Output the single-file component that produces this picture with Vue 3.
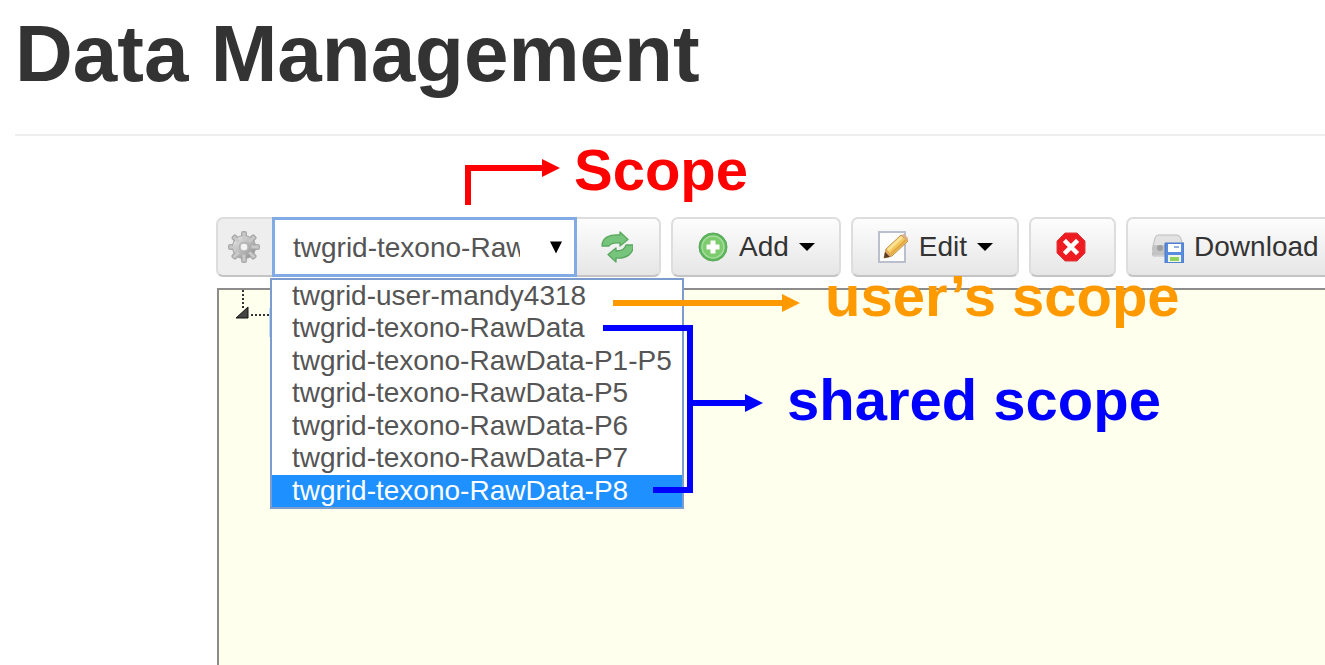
<script setup>
import { ref } from 'vue'

const scopes = [
  'twgrid-user-mandy4318',
  'twgrid-texono-RawData',
  'twgrid-texono-RawData-P1-P5',
  'twgrid-texono-RawData-P5',
  'twgrid-texono-RawData-P6',
  'twgrid-texono-RawData-P7',
  'twgrid-texono-RawData-P8',
]
const scope = ref(scopes[6])
const teeth = [0, 45, 90, 135, 180, 225, 270, 315]
</script>

<template>
  <main class="page">
    <h1 class="title">Data Management</h1>

    <section class="manager">
      <div class="toolbar">
        <div class="group">
          <label class="addon" for="scope" aria-label="Scope">
            <svg class="icon" viewBox="0 0 32 32">
              <defs>
                <linearGradient id="gearFill" x1="0" y1="0" x2="1" y2="1">
                  <stop offset="0" stop-color="#dedede" />
                  <stop offset="1" stop-color="#999" />
                </linearGradient>
              </defs>
              <g fill="#ababab">
                <rect v-for="t in teeth" :key="t" x="13" y="0" width="6" height="9" rx="2" :transform="`rotate(${t} 16 16)`" />
              </g>
              <circle cx="16" cy="16" r="8" fill="none" stroke="#a3a3a3" stroke-width="8" />
              <circle cx="16" cy="16" r="8" fill="none" stroke="url(#gearFill)" stroke-width="6" />
              <g fill="#c9c9c9">
                <rect v-for="t in teeth" :key="t" x="14.5" y="1.5" width="3" height="7" :transform="`rotate(${t} 16 16)`" />
              </g>
              <circle cx="16" cy="16" r="4" fill="#f4f4f4" stroke="#b9b9b9" stroke-width="1.5" />
            </svg>
          </label>
          <div class="picker">
            <select id="scope" v-model="scope" class="select">
              <option v-for="s in scopes" :key="s" :value="s">{{ s }}</option>
            </select>
            <svg class="arrow" viewBox="0 0 12 12"><path d="M0 0H12L6 12Z" fill="#000" /></svg>
            <ul class="menu" role="listbox" aria-label="Scopes">
              <li v-for="s in scopes" :key="s" role="option" :aria-selected="s === scope" :class="['option', { active: s === scope }]" @click="scope = s">{{ s }}</li>
            </ul>
          </div>
          <button class="btn refresh" type="button" aria-label="Refresh">
            <svg class="icon" viewBox="0 0 32 32" stroke="#5aa860" stroke-width="1.3" stroke-linejoin="round">
              <path d="M1 15C1 7 8 3 19 4V1L27 8.500L19 15V12C13 11.500 10 12 8 15Z" fill="#77c47c" />
              <path d="M32 14C33 22 26 28 15 27V31L7 23.500L15 17V20C21 20 24 18 25 14Z" fill="#77c47c" />
            </svg>
          </button>
        </div>

        <button class="btn" type="button">
          <svg class="icon" viewBox="0 0 32 32">
            <circle cx="16" cy="16" r="14" fill="#5cb85a" stroke="#5aa95b" stroke-width="1" />
            <circle cx="16" cy="16" r="11" fill="#7ccb6d" stroke="#a6dc9e" stroke-width="1.5" />
            <path d="M13.500 9.500h5v4h4v5h-4v4h-5v-4h-4v-5h4z" fill="#fff" />
          </svg>
          <span>Add</span>
          <svg class="caret" viewBox="0 0 16 8"><path d="M0 0H16L8 8Z" /></svg>
        </button>

        <button class="btn" type="button">
          <svg class="icon" viewBox="0 0 32 32">
            <path d="M2 1h26v30H2z" fill="#fdfdfe" stroke="#b9bfcc" stroke-width="2" />
            <path d="M7 27l2-9L24 4l7 6-16 15z" fill="#f4c65c" stroke="#c0924a" stroke-width="1" />
            <path d="M11 19L25 6" stroke="#fbe294" stroke-width="3" />
            <path d="M14 23L29 9" stroke="#e0a743" stroke-width="2" />
            <path d="M24 4l3-1 4 4v3z" fill="#dcb08a" />
            <path d="M7 27l2-9 6 7z" fill="#dda663" />
            <path d="M7 27l1-6 5 5z" fill="#5a3b24" />
          </svg>
          <span>Edit</span>
          <svg class="caret" viewBox="0 0 16 8"><path d="M0 0H16L8 8Z" /></svg>
        </button>

        <button class="btn delete" type="button" aria-label="Delete">
          <svg class="icon" viewBox="0 0 32 32">
            <path d="M10 2h12l8 8v12l-8 8H10l-8-8V10z" fill="#ee1c20" stroke="#df3a3d" stroke-width="1" />
            <path d="M11 11l10 10M21 11L11 21" stroke="#fff" stroke-width="4.500" stroke-linecap="square" />
          </svg>
        </button>

        <button class="btn" type="button">
          <svg class="icon" viewBox="0 0 32 32">
            <path d="M6 4h19q3 0 4 4l2 7v10H1q-2-5 0-10l2-8q1-3 3-3z" fill="#e2e2e2" stroke="#bdbdbd" stroke-width="1" />
            <path d="M1 14h29v10H1z" fill="#c3c3c3" />
            <circle cx="8" cy="17" r="3" fill="#9f9f9f" />
            <path d="M13 12h19v20H13z" fill="#5b8bdc" stroke="#4b78c8" stroke-width="1" />
            <path d="M16 13h13v8H16z" fill="#fff" />
            <path d="M22 15h5v2h-5z" fill="#8fb0e8" />
            <path d="M16 24h13v7H16z" fill="#eef7ea" />
            <path d="M18 26h9v4h-9z" fill="#8ed45c" />
          </svg>
          <span>Download</span>
        </button>
      </div>

      <div class="tree">
        <svg class="branch" viewBox="0 0 54 50">
          <path d="M24 0V18M32 25H54" fill="none" stroke="#333" stroke-width="2" stroke-dasharray="2 2" />
          <path d="M17 28L29 17V28Z" fill="#444" stroke="#111" />
          <path d="M50 18h4v29h-4z" fill="#bfdcff" />
        </svg>
      </div>
    </section>

    <div class="notes">
      <svg class="lines" viewBox="0 0 1325 665">
        <g fill="none" stroke-width="6">
          <path d="M468 205V168H544" stroke="#f00" />
          <path d="M613 303H784" stroke="#f90" />
          <path d="M603 328H690V490H653M690 403H746" stroke="#00f" />
        </g>
        <path d="M542 159L560 168L542 177Z" fill="#f00" />
        <path d="M782 294L800 303L782 312Z" fill="#f90" />
        <path d="M745 394L763 403L745 412Z" fill="#00f" />
      </svg>
      <span class="note note-scope">Scope</span>
      <span class="note note-user">user’s scope</span>
      <span class="note note-shared">shared scope</span>
    </div>
  </main>
</template>

<style>
body {
  margin: 0;
  background: #fff;
}
</style>

<style scoped>
.page {
  position: relative;
  display: flex;
  flex-direction: column;
  min-height: 100vh;
  overflow: hidden;
  box-sizing: border-box;
  color: #333;
  font-family: "Liberation Sans", Arial, sans-serif;
  font-size: 28px;
}
.title {
  margin: 0 0 0 15px;
  padding: 9px 0 35px;
  border-bottom: 2px solid #eee;
  font-size: 80px;
  line-height: 90px;
  white-space: nowrap;
}
.manager {
  display: flex;
  flex: 1;
  flex-direction: column;
  margin: 81px 0 0 216px;
}
.toolbar {
  display: flex;
  gap: 10px;
  height: 60px;
}
.group {
  display: flex;
}
.addon,
.btn {
  display: flex;
  flex: none;
  align-items: center;
  box-sizing: border-box;
  border: 2px solid #ddd;
  border-bottom-color: #c4c4c4;
  border-radius: 7px;
}
.addon {
  width: 56px;
  padding-left: 9px;
  border-right: 0;
  border-radius: 7px 0 0 7px;
  background: #eee;
}
.btn {
  gap: 10px;
  padding: 0 24px;
  background: linear-gradient(#fdfdfd, #e6e6e6);
  color: #333;
  font: inherit;
  white-space: nowrap;
}
.refresh {
  width: 84px;
  border-left: 0;
  border-radius: 0 7px 7px 0;
}
.delete {
  width: 87px;
}
.icon {
  flex: none;
  width: 34px;
  height: 32px;
}
.btn .icon {
  width: 32px;
}
.caret {
  width: 16px;
  height: 8px;
  fill: #000;
}
.picker {
  position: relative;
  width: 305px;
}
.select {
  appearance: none;
  box-sizing: border-box;
  width: 100%;
  height: 100%;
  padding: 0 54px 0 18px;
  border: 3px solid #82aae4;
  border-radius: 0;
  outline: 0;
  background: #fff;
  color: #555;
  font: inherit;
}
.arrow {
  position: absolute;
  top: 24px;
  right: 15px;
  width: 12px;
  height: 13px;
  pointer-events: none;
}
.menu {
  position: absolute;
  z-index: 2;
  top: 61px;
  left: -2px;
  display: grid;
  grid-auto-rows: 1fr;
  box-sizing: border-box;
  width: 414px;
  height: 231px;
  margin: 0;
  padding: 0;
  border: 2px solid #7b9ccd;
  background: #fff;
  list-style: none;
}
.option {
  padding-left: 20px;
  color: #555;
  line-height: 32px;
  white-space: nowrap;
}
.active {
  background: #1e90ff;
  color: #fff;
}
.tree {
  flex: 1;
  margin: 11px 0 0 1px;
  border: 2px solid #8c8c8c;
  border-right: 0;
  border-bottom: 0;
  background: #ffe;
}
.branch {
  display: block;
  width: 54px;
  height: 50px;
}
.notes {
  position: absolute;
  z-index: 3;
  top: 0;
  left: 0;
  pointer-events: none;
}
.lines {
  display: block;
  width: 1325px;
  height: 665px;
}
.note {
  position: absolute;
  font-size: 58px;
  font-weight: bold;
  line-height: 64px;
  white-space: nowrap;
}
.note-scope {
  top: 138px;
  left: 574px;
  color: #f00;
}
.note-user {
  top: 264px;
  left: 825px;
  color: #f90;
}
.note-shared {
  top: 368px;
  left: 787px;
  color: #00f;
}
</style>
